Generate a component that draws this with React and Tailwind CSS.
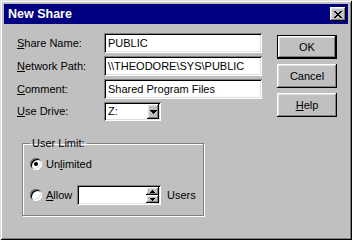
import React from "react";

const raised =
  "shadow-[inset_-1px_-1px_0_#000,inset_1px_1px_0_#fff,inset_-2px_-2px_0_#808080,inset_2px_2px_0_#dfdfdf]";
const sunken =
  "shadow-[inset_1px_1px_0_#808080,inset_-1px_-1px_0_#fff,inset_2px_2px_0_#000,inset_-2px_-2px_0_#dfdfdf]";

function CloseIcon() {
  return (
    <svg width="8" height="7" viewBox="0 0 8 7" shapeRendering="crispEdges">
      <path
        d="M0 0h2v1H0zM6 0h2v1H6zM1 1h2v1H1zM5 1h2v1H5zM2 2h4v1H2zM3 3h2v1H3zM2 4h4v1H2zM1 5h2v1H1zM5 5h2v1H5zM0 6h2v1H0zM6 6h2v1H6z"
        fill="#000"
      />
    </svg>
  );
}

function DownTri({ w = 7 }) {
  return (
    <svg width="7" height="4" viewBox="0 0 7 4" shapeRendering="crispEdges">
      <path d="M0 0h7v1H0zM1 1h5v1H1zM2 2h3v1H2zM3 3h1v1H3z" fill="#000" />
    </svg>
  );
}

function SmallTri({ up }) {
  return (
    <svg width="5" height="3" viewBox="0 0 5 3" shapeRendering="crispEdges">
      {up ? (
        <path d="M2 0h1v1H2zM1 1h3v1H1zM0 2h5v1H0z" fill="#000" />
      ) : (
        <path d="M0 0h5v1H0zM1 1h3v1H1zM2 2h1v1H2z" fill="#000" />
      )}
    </svg>
  );
}

function Radio({ checked }) {
  return (
    <div
      className={`relative w-[12px] h-[12px] rounded-full bg-white ${sunken} flex items-center justify-center shrink-0`}
    >
      {checked && <div className="w-[4px] h-[4px] rounded-full bg-black" />}
    </div>
  );
}

function Row({ label, children }) {
  return (
    <div className="flex items-center h-[20px]">
      <div className="w-[87px] shrink-0">{label}</div>
      {children}
    </div>
  );
}

function TextBox({ value }) {
  return (
    <div className={`w-[158px] h-[20px] bg-white ${sunken} flex items-center pl-[4px] whitespace-nowrap`}>
      {value}
    </div>
  );
}

export default function App() {
  return (
    <div className="w-[359px] h-[247px] bg-white">
      <div
        className="w-[352px] h-[240px] bg-[#c0c0c0] shadow-[inset_1px_1px_0_#dfdfdf,inset_-1px_-1px_0_#000,inset_2px_2px_0_#fff,inset_-2px_-2px_0_#808080] p-[4px] flex flex-col text-[11px] leading-[13px] text-black"
        style={{ fontFamily: "'Liberation Sans', Arial, sans-serif" }}
      >
        <div className="h-[20px] bg-[#000080] flex items-center justify-between pl-[4px] pr-[2px] shrink-0">
          <span className="text-white font-bold text-[12.5px]">New Share</span>
          <div className={`w-[16px] h-[14px] bg-[#c0c0c0] ${raised} flex items-center justify-center`}>
            <CloseIcon />
          </div>
        </div>
        <div className="flex">
          <div className="pl-[13px] pt-[9px] flex flex-col">
            <div className="flex flex-col gap-[3px]">
              <Row label={<span><u>S</u>hare Name:</span>}>
                <TextBox value="PUBLIC" />
              </Row>
              <Row label={<span><u>N</u>etwork Path:</span>}>
                <TextBox value="\\THEODORE\SYS\PUBLIC" />
              </Row>
              <Row label={<span><u>C</u>omment:</span>}>
                <TextBox value="Shared Program Files" />
              </Row>
              <div className="flex items-center h-[19px]">
                <div className="w-[87px] shrink-0"><u>U</u>se Drive:</div>
                <div className={`w-[57px] h-[19px] bg-white ${sunken} flex items-center justify-between pl-[4px] pr-[2px]`}>
                  <span>Z:</span>
                  <div className={`w-[12px] h-[15px] bg-[#c0c0c0] ${raised} flex items-center justify-center`}>
                    <DownTri />
                  </div>
                </div>
              </div>
            </div>
            <fieldset className="ml-[5px] mt-[16px] w-[182px] h-[79px] border border-[#808080] shadow-[inset_1px_1px_0_#fff,1px_1px_0_#fff]">
              <legend className="ml-[7px] px-[2px] leading-[12px]">User Limit:</legend>
              <div className="pl-[7px] pt-[8px] flex flex-col">
                <div className="flex items-center h-[14px] gap-[4px]">
                  <Radio checked />
                  <span>Un<u>l</u>imited</span>
                </div>
                <div className="flex items-center h-[20px] mt-[14px]">
                  <Radio />
                  <span className="ml-[4px] w-[31px]"><u>A</u>llow</span>
                  <div className={`w-[84px] h-[20px] bg-white ${sunken} flex justify-end p-[2px]`}>
                    <div className="flex flex-col w-[13px]">
                      <div className={`h-[8px] bg-[#c0c0c0] ${raised} flex items-center justify-center`}>
                        <SmallTri up />
                      </div>
                      <div className={`h-[8px] bg-[#c0c0c0] ${raised} flex items-center justify-center`}>
                        <SmallTri />
                      </div>
                    </div>
                  </div>
                  <span className="ml-[6px]">Users</span>
                </div>
              </div>
            </fieldset>
          </div>
          <div className="ml-[15px] pt-[11px] flex flex-col gap-[5px]">
            <div className="w-[60px] h-[24px] border border-black">
              <div className={`w-full h-full bg-[#c0c0c0] ${raised} flex items-center justify-center`}>OK</div>
            </div>
            <div className={`w-[60px] h-[24px] bg-[#c0c0c0] ${raised} flex items-center justify-center`}>Cancel</div>
            <div className={`w-[60px] h-[24px] bg-[#c0c0c0] ${raised} flex items-center justify-center`}>
              <span><u>H</u>elp</span>
            </div>
          </div>
        </div>
      </div>
    </div>
  );
}
